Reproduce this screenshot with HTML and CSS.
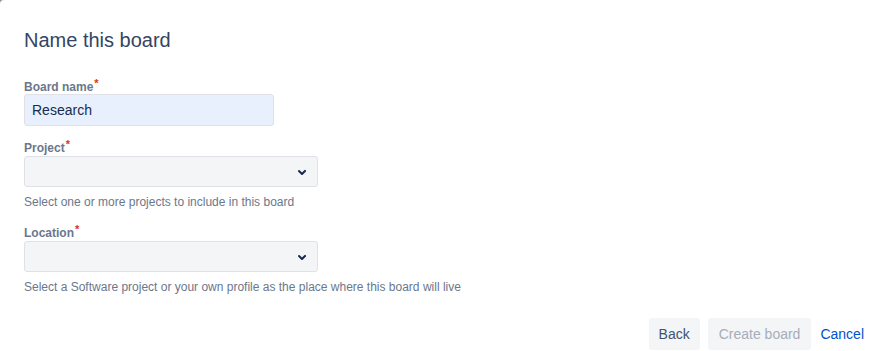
FILE: index.html
```html
<!DOCTYPE html>
<html lang="en">
<head>
  <meta charset="UTF-8" />
  <meta name="viewport" content="width=device-width, initial-scale=1.0" />
  <title>Name this board</title>
  <link rel="stylesheet" href="styles.css">
</head>
<body>
  <div class="dialog">
    <h3 class="title">Name this board</h3>

    <form class="form">
      <div class="field">
        <label for="board-name">Board name<span class="req">*</span></label>
        <input id="board-name" class="text-input" type="text" value="Research" />
      </div>

      <div class="field">
        <label for="project">Project<span class="req">*</span></label>
        <div class="select">
          <svg class="chevron" width="24" height="24" viewBox="0 0 24 24"><path d="M8.3 10.3a1 1 0 0 1 1.4 0L12 12.6l2.3-2.3a1 1 0 1 1 1.4 1.4l-3 3a1 1 0 0 1-1.4 0l-3-3a1 1 0 0 1 0-1.4z" fill="currentColor"/></svg>
        </div>
        <p class="help">Select one or more projects to include in this board</p>
      </div>

      <div class="field">
        <label for="location">Location<span class="req">*</span></label>
        <div class="select">
          <svg class="chevron" width="24" height="24" viewBox="0 0 24 24"><path d="M8.3 10.3a1 1 0 0 1 1.4 0L12 12.6l2.3-2.3a1 1 0 1 1 1.4 1.4l-3 3a1 1 0 0 1-1.4 0l-3-3a1 1 0 0 1 0-1.4z" fill="currentColor"/></svg>
        </div>
        <p class="help">Select a Software project or your own profile as the place where this board will live</p>
      </div>
    </form>

    <div class="actions">
      <button class="btn">Back</button>
      <button class="btn" disabled>Create board</button>
      <button class="btn link">Cancel</button>
    </div>
  </div>
</body>
</html>
```

FILE: styles.css
```css
body {
  margin: 0;
  background: #8993a4;
  font-family: "Liberation Sans", "Noto Sans", sans-serif;
  color: #172b4d;
}
.dialog {
  background: white;
  border-top-left-radius: 4px;
  min-height: 351px;
  box-sizing: border-box;
  padding: 28px 9px 0 24px;
}
.title {
  margin: 0;
  font-size: 20px;
  line-height: 24px;
  font-weight: 400;
  color: #344563;
}
.form {
  margin-top: 27px;
  display: flex;
  flex-direction: column;
  gap: 14px;
}
.field + .field + .field {
  margin-top: 1px;
}
.field label {
  display: block;
  font-size: 12px;
  line-height: 16px;
  font-weight: 700;
  color: #6b778c;
}
.req {
  color: #de350b;
  font-size: 11px;
  position: relative;
  top: -4px;
  margin-left: 1px;
}
.text-input {
  display: block;
  width: 250px;
  height: 32px;
  box-sizing: border-box;
  margin: -1px 0 0;
  padding: 0 7px;
  border: 1px solid #dfe1e6;
  border-radius: 3px;
  background: #e8f0fe;
  font: inherit;
  font-size: 14px;
  color: #172b4d;
}
.select {
  width: 294px;
  height: 31px;
  box-sizing: border-box;
  border: 1px solid #dfe1e6;
  border-radius: 3px;
  background: #f4f5f7;
  display: flex;
  align-items: center;
  justify-content: flex-end;
  padding-right: 3px;
}
.chevron {
  color: #172b4d;
}
.help {
  margin: 7px 0 0;
  font-size: 12px;
  line-height: 16px;
  color: #6b778c;
}
.actions {
  margin-top: 23px;
  display: flex;
  justify-content: flex-end;
  gap: 8px;
}
.btn {
  height: 32px;
  padding: 0 10px;
  border: none;
  border-radius: 3px;
  background: #f4f5f7;
  font: inherit;
  font-size: 14px;
  color: #42526e;
}
.btn[disabled] {
  color: #a5adba;
  padding: 0 11px;
}
.btn.link {
  background: none;
  color: #0052cc;
  padding: 0;
  margin-left: 1px;
}
```
